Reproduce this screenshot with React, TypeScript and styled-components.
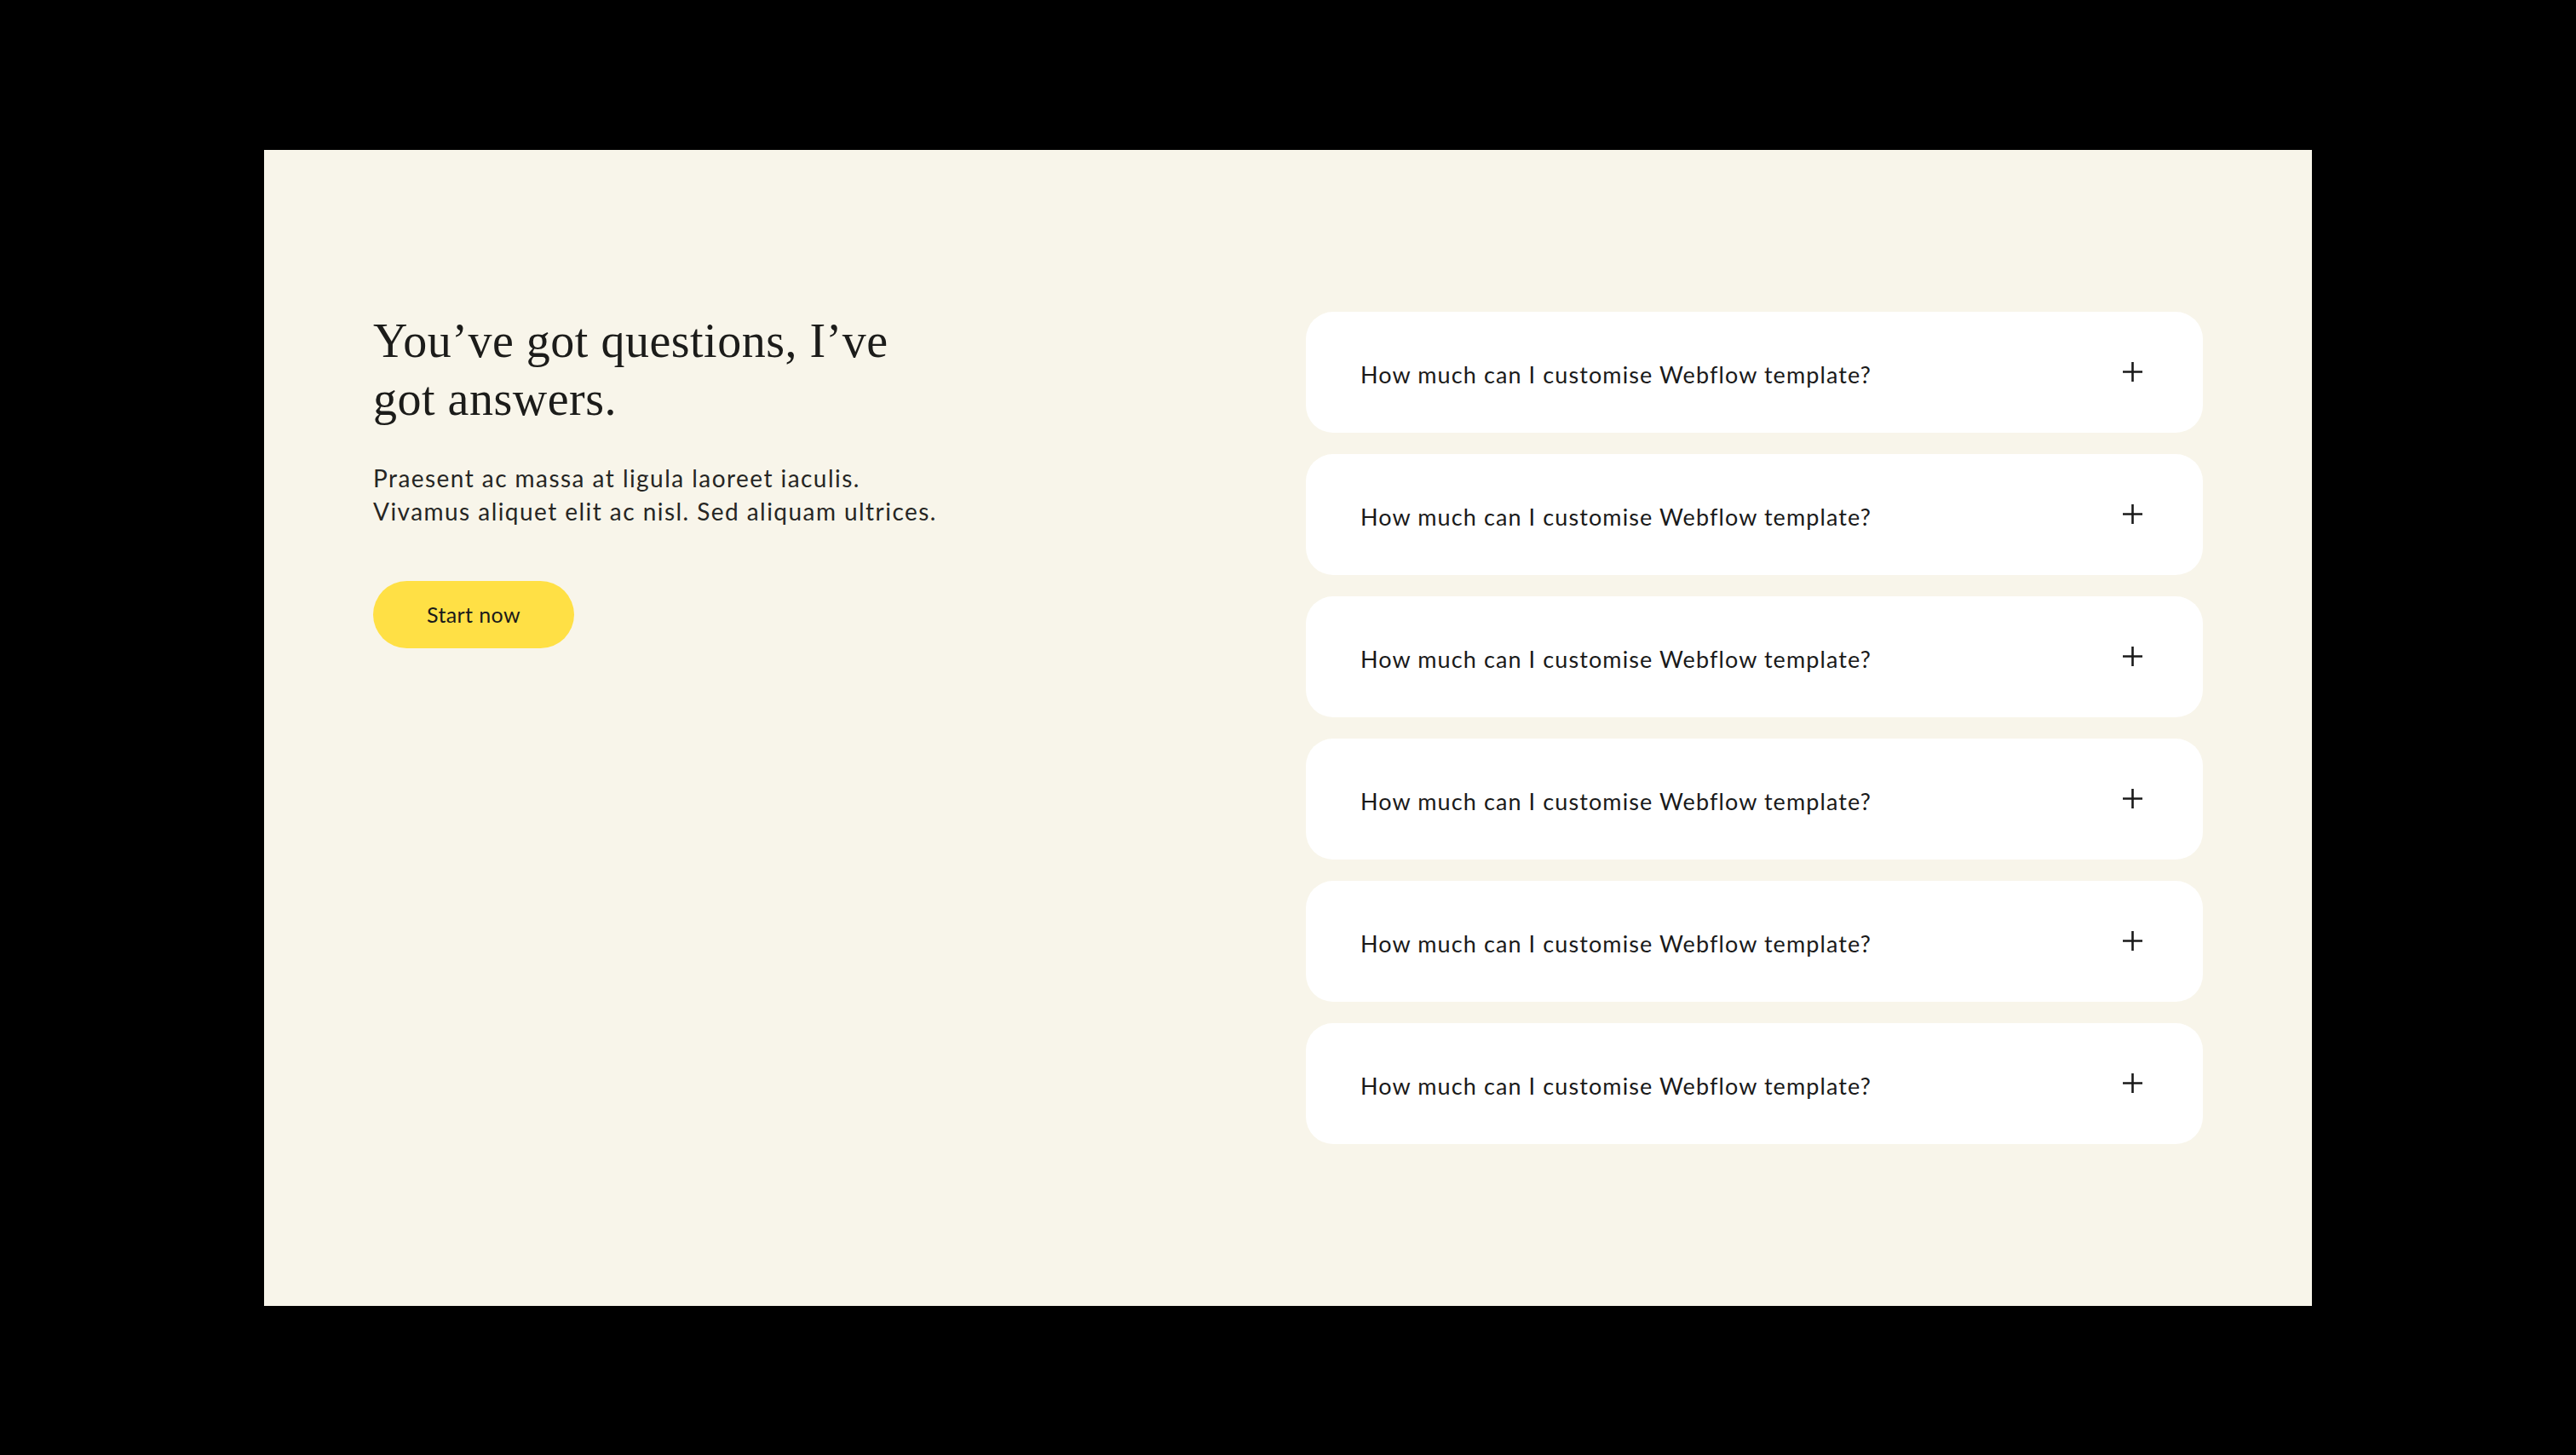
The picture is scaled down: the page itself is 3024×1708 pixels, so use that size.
import React from 'react';
import styled, { createGlobalStyle } from 'styled-components';

const GlobalStyle = createGlobalStyle`
  html, body {
    margin: 0;
    padding: 0;
    background: #000;
  }
  * {
    box-sizing: border-box;
  }
`;

const Page = styled.div`
  min-height: 100vh;
  display: flex;
  align-items: center;
  justify-content: center;
  background: #000;
`;

const Panel = styled.section`
  width: 2404px;
  background: #f8f5ea;
  padding: 190px 128px;
  display: grid;
  grid-template-columns: 1fr 1053px;
  align-items: start;
`;

const Intro = styled.div`
  display: flex;
  flex-direction: column;
  align-items: flex-start;
`;

const Heading = styled.h2`
  margin: 0;
  font-family: 'Liberation Serif', 'DejaVu Serif', serif;
  font-weight: 400;
  font-size: 56px;
  line-height: 68px;
  color: #1c1c1a;
  letter-spacing: 0.5px;
`;

const Lead = styled.p`
  margin: 40px 0 0;
  font-family: Lato, 'Open Sans', sans-serif;
  font-weight: 400;
  font-size: 28px;
  line-height: 39px;
  letter-spacing: 1.45px;
  color: #262624;
`;

const StartButton = styled.button`
  margin-top: 62px;
  height: 79px;
  padding: 0 63px;
  border: none;
  border-radius: 40px;
  background: #ffe045;
  font-family: Lato, 'Open Sans', sans-serif;
  font-size: 25px;
  letter-spacing: 0.4px;
  color: #1a1a1a;
  cursor: pointer;
`;

const FaqList = styled.div`
  display: flex;
  flex-direction: column;
  gap: 25px;
`;

const FaqItem = styled.div`
  height: 142px;
  background: #ffffff;
  border-radius: 32px;
  padding: 0 71px 0 64px;
  display: flex;
  align-items: center;
  justify-content: space-between;
`;

const Question = styled.span`
  padding-top: 6px;
  font-family: Lato, 'Open Sans', sans-serif;
  font-size: 27px;
  letter-spacing: 1.1px;
  color: #1a1a1a;
`;

const PlusIcon = () => (
  <svg width="23" height="23" viewBox="0 0 23 23" fill="none">
    <path d="M11.5 0v23M0 11.5h23" stroke="#1a1a1a" strokeWidth="2.6" />
  </svg>
);

const questions = Array.from({ length: 6 }, () => 'How much can I customise Webflow template?');

export default function App() {
  return (
    <>
      <GlobalStyle />
      <Page>
        <Panel>
          <Intro>
            <Heading>
              You’ve got questions, I’ve
              <br />
              got answers.
            </Heading>
            <Lead>
              Praesent ac massa at ligula laoreet iaculis.
              <br />
              Vivamus aliquet elit ac nisl. Sed aliquam ultrices.
            </Lead>
            <StartButton>Start now</StartButton>
          </Intro>
          <FaqList>
            {questions.map((q, i) => (
              <FaqItem key={i}>
                <Question>{q}</Question>
                <PlusIcon />
              </FaqItem>
            ))}
          </FaqList>
        </Panel>
      </Page>
    </>
  );
}
